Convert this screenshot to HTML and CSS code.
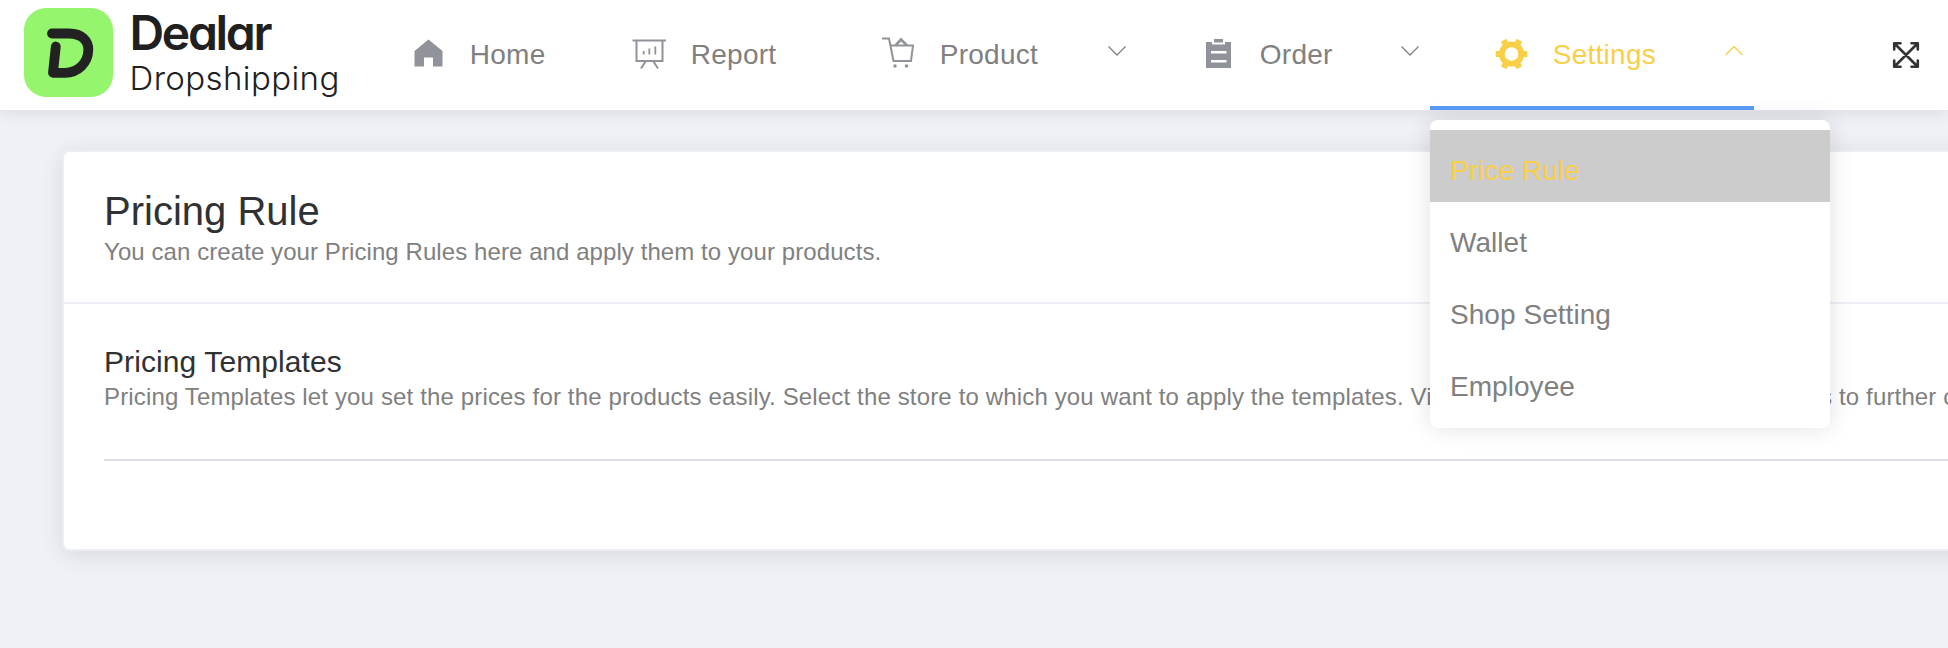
FILE: index.html
```html
<!DOCTYPE html>
<html lang="en">
<head>
<meta charset="utf-8">
<title>Pricing Rule</title>
<link rel="stylesheet" href="styles.css">
</head>
<body>
<header class="header">
  <div class="brand">
    <svg class="brand-mark" viewBox="0 0 89 89"><rect width="89" height="89" rx="22" fill="#95f56d"/><path d="M28 25.5H45C58 25.5 64.5 33 64.3 42C64 55 54 64.8 41 64.8H29L31.8 38.5" fill="none" stroke="#222" stroke-width="9.8" stroke-linecap="round" stroke-linejoin="round"/></svg>
    <div class="brand-text"><span class="brand-name">Dealar</span><span class="brand-sub">Dropshipping</span></div>
  </div>
  <nav class="nav">
    <a class="item home"><svg class="icon" viewBox="0 0 36 36"><path d="M3.5 14L17.5 2.5L31.5 14V29.5H22V20.5H13V29.5H3.5Z" fill="currentColor"/></svg><span class="label">Home</span></a>
    <a class="item report"><svg class="icon" viewBox="0 0 36 36" fill="none" stroke="currentColor" stroke-width="2"><path d="M.5 3.5H34M4.5 3.5V24.1H30.5V3.5M13.5 24.5L9 31.5M21.5 24.5L26 31.5"/><path d="M11.7 14V17.5M17.3 11.5V17.5M23.3 9.5V17.5" stroke-width="1.8"/></svg><span class="label">Report</span></a>
    <a class="item product"><svg class="icon" viewBox="0 0 36 36" fill="none" stroke="currentColor" stroke-width="2"><path d="M1 1.5H8L12.5 24H30L32 8.5H9.5"/><path d="M14.5 8.5L20 2.5L26 8.5" stroke-width="2.6"/><circle cx="14" cy="29" r="1.8" fill="currentColor" stroke="none"/><circle cx="25.5" cy="29" r="1.8" fill="currentColor" stroke="none"/></svg><span class="label">Product</span><svg class="chevron" viewBox="0 0 18 10"><path d="M.5 .5L9 9L17.5 .5"/></svg></a>
    <a class="item order"><svg class="icon" viewBox="0 0 36 36"><path d="M5 5H11V7.5H24V5H30V31H5ZM13 2H22V5.5H13ZM10 14V16.4H25.5V14ZM10 23V25.4H25.5V23Z" fill="currentColor" fill-rule="evenodd"/></svg><span class="label">Order</span><svg class="chevron" viewBox="0 0 18 10"><path d="M.5 .5L9 9L17.5 .5"/></svg></a>
    <div class="item settings active"><svg class="icon" viewBox="0 0 36 36"><circle cx="17.5" cy="17" r="9.7" fill="none" stroke="currentColor" stroke-width="5.8"/><g fill="currentColor"><path id="teeth" d="M1.7 13.9H33.3V20.1H1.7Z"/><use href="#teeth" transform="rotate(60 17.5 17)"/><use href="#teeth" transform="rotate(120 17.5 17)"/></g><circle cx="17.5" cy="17" r="6.8" fill="#fff"/></svg><span class="label">Settings</span><svg class="chevron" viewBox="0 0 18 10"><path d="M.5 9L9 .5L17.5 9"/></svg>
      <div class="menu">
        <a class="option selected">Price Rule</a>
        <a class="option">Wallet</a>
        <a class="option">Shop Setting</a>
        <a class="option">Employee</a>
      </div>
    </div>
  </nav>
  <svg class="fullscreen" viewBox="0 0 28 28"><path d="M3 3L25 25M25 3L3 25M8.5 2.2H2.2V8.5M19.5 2.2H25.8V8.5M8.5 25.8H2.2V19.5M19.5 25.8H25.8V19.5" fill="none" stroke="#333" stroke-width="2.6" stroke-linecap="round" stroke-linejoin="round"/></svg>
</header>
<main class="page">
  <section class="card">
    <div class="card-head">
      <h1 class="title">Pricing Rule</h1>
      <p class="hint">You can create your Pricing Rules here and apply them to your products.</p>
    </div>
    <div class="card-body">
      <h2 class="subtitle">Pricing Templates</h2>
      <p class="hint hint-split"><span class="lead">Pricing Templates let you set the prices for the products easily. Select the store to which you want to apply the templates. Vi</span><span>s to further c</span></p>
      <hr class="rule">
    </div>
  </section>
</main>
</body>
</html>
```
FILE: styles.css
```css
* { box-sizing: border-box; }
body { margin: 0; height: 648px; overflow: hidden; background: #eff1f6; font-family: "Liberation Sans", Arial, sans-serif; color: #303133; }
.header { position: relative; z-index: 1; display: flex; height: 110px; background: #fff; box-shadow: 0 2px 16px rgba(0, 21, 41, .1); }
.brand { display: flex; flex: none; width: 347px; padding: 8px 0 0 24px; }
.brand-mark { flex: none; width: 89px; height: 89px; }
.brand-text { display: flex; flex-direction: column; padding-left: 16.5px; color: #202020; font-family: Inter, sans-serif; font-feature-settings: "cv11"; white-space: nowrap; }
.brand-name { height: 48px; font-size: 48px; line-height: 50px; font-weight: 600; letter-spacing: -2.3px; }
.brand-sub { font-size: 33px; line-height: 44px; font-weight: 300; letter-spacing: .4px; }
.nav { display: flex; flex: none; }
.item { position: relative; display: flex; align-items: center; padding: 0 11px 0 63.5px; color: #808080; font-size: 28px; white-space: nowrap; }
.icon { flex: none; width: 36px; height: 36px; margin-right: 23.3px; color: #909399; }
.label { flex: 1; letter-spacing: .25px; }
.chevron { width: 18px; height: 10px; margin-top: -9px; fill: none; stroke: currentColor; stroke-width: 1.3; }
.home { width: 221px; }
.report { width: 249px; }
.product { width: 320px; }
.order { width: 293px; }
.settings { width: 324px; }
.active, .active .icon { color: #f8cf46; }
.active::after { content: ""; position: absolute; left: 0; right: 0; bottom: 0; height: 4px; background: #5899f6; }
.menu { position: absolute; left: 0; top: 120px; width: 400px; height: 308px; padding: 10px 0; border-radius: 8px; background: #fff; box-shadow: 0 0 24px rgba(0, 0, 0, .12); }
.option { display: block; height: 72px; padding: 9px 20px 0; color: #808080; line-height: 64px; letter-spacing: .05px; }
.selected { background: #ccc; color: #f8cf46; }
.fullscreen { flex: none; width: 28px; height: 28px; margin: 41px 0 0 137.5px; }
.page { padding: 40px 0 0 62px; }
.card { width: 1950px; height: 401px; border: 2px solid #ebeef5; border-radius: 8px; background: #fff; box-shadow: 0 4px 24px rgba(0, 0, 0, .1); }
.card-head { height: 152px; padding: 36px 40px 0; border-bottom: 2px solid #ebeef5; white-space: nowrap; }
.card-body { padding: 40px 40px 0; white-space: nowrap; }
.title, .subtitle, .hint { margin: 0; font-weight: 400; }
.title { font-size: 40px; line-height: 47px; }
.subtitle { font-size: 30px; line-height: 36px; letter-spacing: .1px; }
.hint { color: #808080; font-size: 24px; line-height: 34px; letter-spacing: .08px; }
.hint-split { display: flex; letter-spacing: .15px; }
.lead { flex: none; width: 1716px; }
.rule { height: 2px; margin: 45px 0 0; border: 0; background: #dedfe6; }
```
